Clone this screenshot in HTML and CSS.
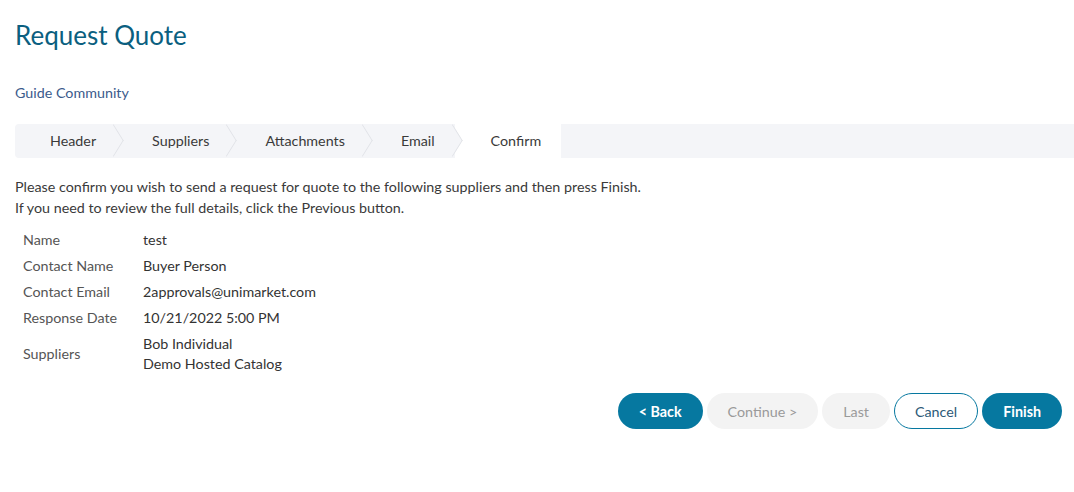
FILE: index.html
```html
<!DOCTYPE html>
<html lang="en">
<head>
    <meta charset="UTF-8">
    <meta name="viewport" content="width=device-width, initial-scale=1.0">
    <title>Request Quote</title>
    <link rel="stylesheet" href="styles.css">
</head>
<body>
    <h1 class="page-title">Request Quote</h1>
    <a class="community" href="#">Guide Community</a>

    <div class="wizard">
        <ol class="steps">
            <li class="step">Header</li>
            <li class="step">Suppliers</li>
            <li class="step">Attachments</li>
            <li class="step">Email</li>
            <li class="step active">Confirm</li>
        </ol>
        <div class="wizard-fill"></div>
    </div>

    <p class="intro">
        Please confirm you wish to send a request for quote to the following suppliers and then press Finish.<br>
        If you need to review the full details, click the Previous button.
    </p>

    <table class="details">
        <tr>
            <th>Name</th>
            <td>test</td>
        </tr>
        <tr>
            <th>Contact Name</th>
            <td>Buyer Person</td>
        </tr>
        <tr>
            <th>Contact Email</th>
            <td>2approvals@unimarket.com</td>
        </tr>
        <tr>
            <th>Response Date</th>
            <td>10/21/2022 5:00 PM</td>
        </tr>
        <tr>
            <th>Suppliers</th>
            <td>Bob Individual<br>Demo Hosted Catalog</td>
        </tr>
    </table>

    <div class="actions">
        <button class="btn btn-primary">&lt; Back</button>
        <button class="btn btn-disabled" disabled>Continue &gt;</button>
        <button class="btn btn-disabled" disabled>Last</button>
        <button class="btn btn-outline">Cancel</button>
        <button class="btn btn-primary">Finish</button>
    </div>
</body>
</html>
```

FILE: styles.css
```css
body {
    font-family: Lato, "Liberation Sans", sans-serif;
    font-size: 14.3px;
    color: #3a3a3a;
    margin: 0;
    padding: 0 0 0 15px;
}
.page-title {
    font-size: 26px;
    font-weight: normal;
    color: #0b5f80;
    margin: 20px 0 0 0;
    line-height: 30px;
}
.community {
    display: block;
    margin-top: 34px;
    color: #3b5b8c;
    text-decoration: none;
    line-height: 18px;
}
.wizard {
    display: flex;
    margin-top: 22px;
    height: 34px;
}
.steps {
    display: flex;
    list-style: none;
    margin: 0;
    padding: 0;
    background: #f4f5f8;
    border-radius: 4px 0 0 4px;
    overflow: hidden;
}
.step {
    position: relative;
    padding: 0 20px 0 36px;
    line-height: 34px;
    color: #3a3a3a;
    white-space: nowrap;
}
.step:first-child {
    padding-left: 35px;
}
.step::after {
    content: "";
    position: absolute;
    top: 3px;
    right: -9px;
    width: 22px;
    height: 22px;
    margin-top: 2px;
    background: #f4f5f8;
    border-top: 1px solid #dfe1e6;
    border-right: 1px solid #dfe1e6;
    transform: scaleX(0.62) rotate(45deg);
    z-index: 1;
}
.step.active {
    background: #fff;
}
.step.active::after {
    display: none;
}
.wizard-fill {
    flex: 1;
    background: #f4f5f8;
}
.intro {
    margin: 18px 0 0 0;
    line-height: 21px;
}
.details {
    border-collapse: collapse;
    margin-top: 9px;
}
.details th,
.details td {
    text-align: left;
    vertical-align: middle;
    padding: 3px 8px;
    line-height: 20px;
}
.details th {
    font-weight: normal;
    color: #555;
    width: 104px;
}
.details td {
    color: #333;
}
.actions {
    display: flex;
    justify-content: flex-end;
    gap: 4px;
    margin-top: 16px;
    padding-right: 12px;
}
.btn {
    height: 36px;
    padding: 0 20px;
    border-radius: 18px;
    border: 1px solid transparent;
    font-family: inherit;
    font-size: 14.3px;
    cursor: pointer;
}
.btn-primary {
    background: #0678a0;
    color: #fff;
    font-weight: bold;
}
.btn-disabled {
    background: #f3f3f3;
    color: #9a9a9a;
    cursor: default;
}
.btn-outline {
    background: #fff;
    border-color: #0678a0;
    color: #2d5a78;
}
```
